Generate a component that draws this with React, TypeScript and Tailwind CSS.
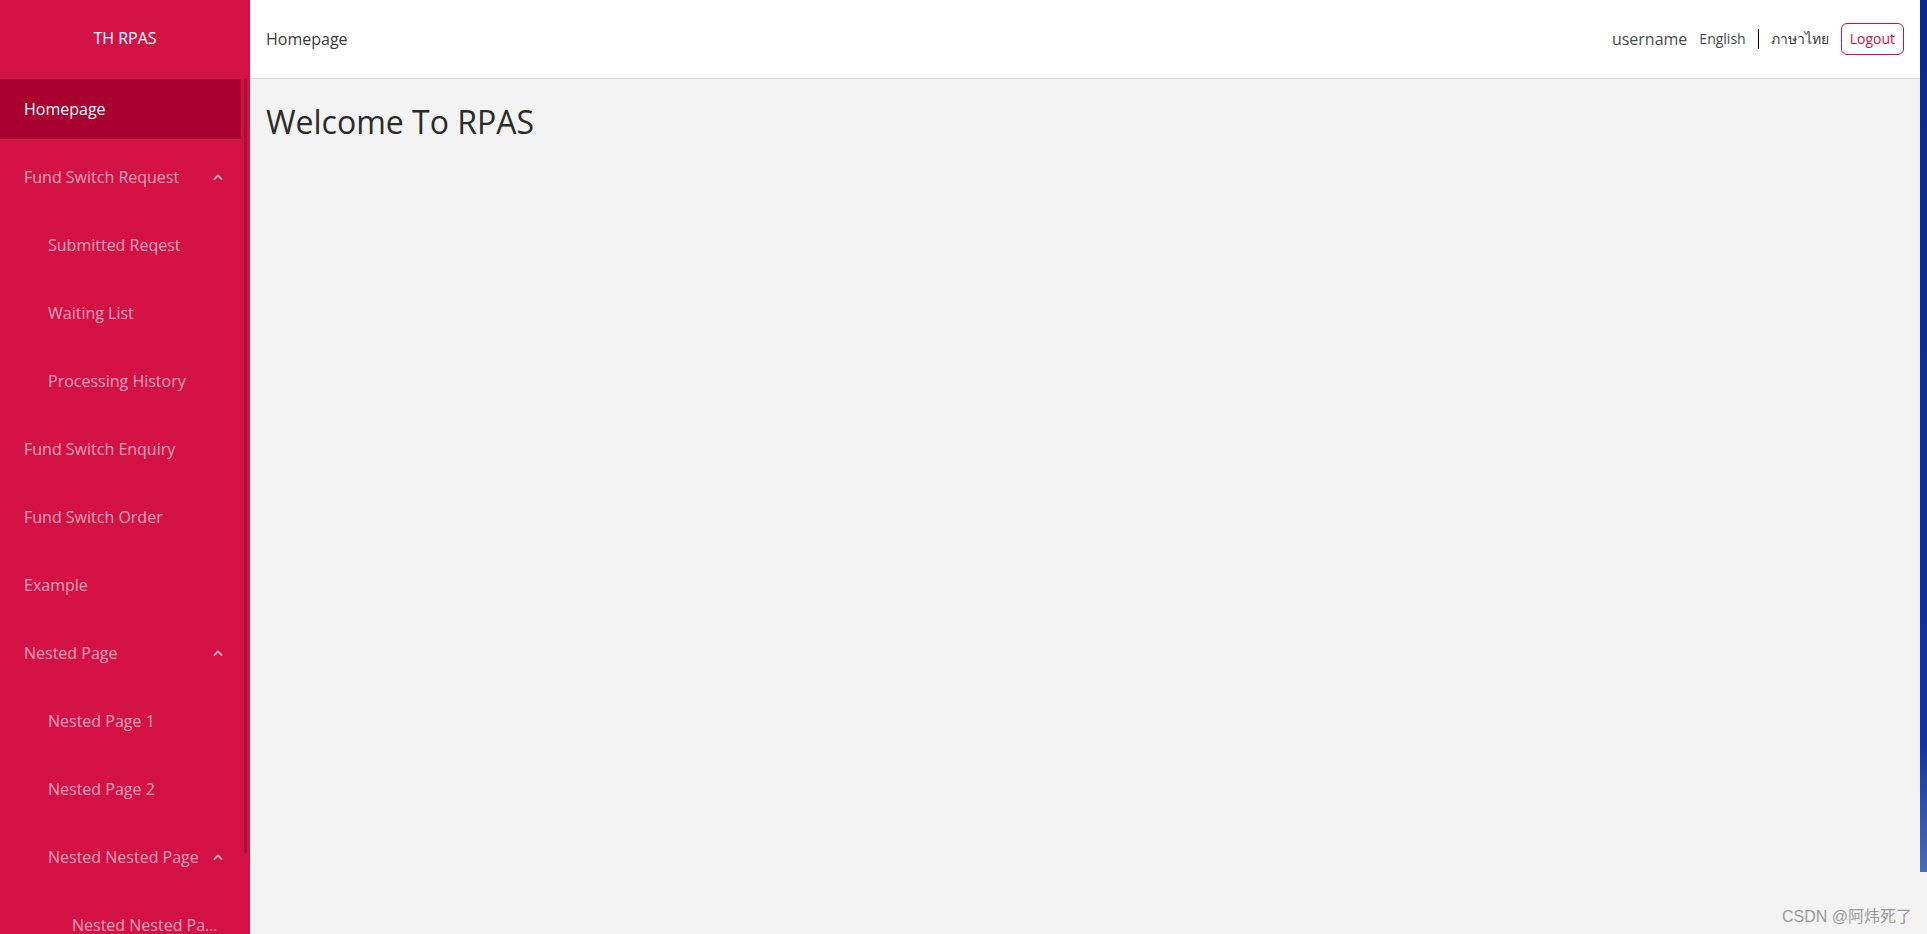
import { useState } from "react";

// sidebar menu data
interface MenuItem {
  label: string;
  level: number;
  active?: boolean;
  open?: boolean;
}

const menu: MenuItem[] = [
  { label: "Homepage", level: 0, active: true },
  { label: "Fund Switch Request", level: 0, open: true },
  { label: "Submitted Reqest", level: 1 },
  { label: "Waiting List", level: 1 },
  { label: "Processing History", level: 1 },
  { label: "Fund Switch Enquiry", level: 0 },
  { label: "Fund Switch Order", level: 0 },
  { label: "Example", level: 0 },
  { label: "Nested Page", level: 0, open: true },
  { label: "Nested Page 1", level: 1 },
  { label: "Nested Page 2", level: 1 },
  { label: "Nested Nested Page", level: 1, open: true },
  { label: "Nested Nested Page 1", level: 2 },
];

const indent = ["pl-6", "pl-12", "pl-[72px]"];

function ChevronUp() {
  return (
    <svg width="10" height="6" viewBox="0 0 10 6" fill="none" className="shrink-0">
      <path d="M1.5 5 L5 1.5 L8.5 5" stroke="#f5a3bb" strokeWidth="2" strokeLinecap="round" strokeLinejoin="round" />
    </svg>
  );
}

export default function App() {
  const [lang, setLang] = useState("en");

  return (
    <div
      className="flex h-screen w-full overflow-hidden bg-[#f3f3f3]"
      style={{ fontFamily: '"Open Sans", "Noto Sans", sans-serif' }}
    >
      {/* Sidebar */}
      <aside className="relative flex w-[250px] shrink-0 flex-col bg-[#d31145]">
        <div className="flex h-[79px] shrink-0 items-center justify-center pb-1 text-base text-white">
          TH RPAS
        </div>
        <nav className="flex w-[241px] flex-col gap-2 overflow-hidden">
          {menu.map((item, i) => (
            <div
              key={i}
              className={`flex h-[60px] shrink-0 items-center justify-between text-base ${indent[item.level]} ${
                item.open ? "pr-[18px]" : "pr-5"
              } ${item.active ? "bg-[#a8002f] text-white" : "text-[#f5a3bb]"}`}
            >
              <span className="truncate">{item.label}</span>
              {item.open && <ChevronUp />}
            </div>
          ))}
        </nav>
        {/* scrollbar thumb */}
        <div className="absolute left-[244px] top-[78px] h-[775px] w-[3px] rounded-full bg-[#a3123c]" />
      </aside>

      {/* Main */}
      <div className="relative flex min-w-0 flex-1 flex-col">
        <header className="flex h-[79px] shrink-0 items-center justify-between border-b border-[#dcdcdc] bg-white px-4">
          <span className="text-base text-[#3a3a3a]">Homepage</span>
          <div className="flex items-center gap-3">
            <span className="text-base text-[#4a4a4a]">username</span>
            <button
              onClick={() => setLang("en")}
              className={`text-sm ${lang === "en" ? "text-[#3f4a55]" : "text-[#555]"}`}
            >
              English
            </button>
            <span className="h-5 w-px bg-black" />
            <button
              onClick={() => setLang("th")}
              className="text-sm text-[#3a3a3a]"
              style={{ fontFamily: '"Noto Sans", "DejaVu Sans", sans-serif' }}
            >
              ภาษาไทย
            </button>
            <button className="rounded-md border border-[#d31145] bg-white px-2 py-[5px] text-sm text-[#d31145]">
              Logout
            </button>
          </div>
        </header>
        <main className="flex-1 px-4 pt-[19px]">
          <h1 className="text-[32px] leading-[48px] text-[#2b2b2b]">Welcome To RPAS</h1>
        </main>
        <div
          className="absolute bottom-[5px] right-2 text-base text-[#9a9a9a]"
          style={{ fontFamily: '"Liberation Sans", "Noto Sans CJK SC", sans-serif' }}
        >
          CSDN @阿炜死了
        </div>
      </div>

      {/* desktop edge */}
      <div className="flex w-[7px] shrink-0 flex-col">
        <div className="h-[872px] bg-gradient-to-b from-[#08298f] via-[#0b33a0] via-85% to-[#4a6cb8]" />
      </div>
    </div>
  );
}
